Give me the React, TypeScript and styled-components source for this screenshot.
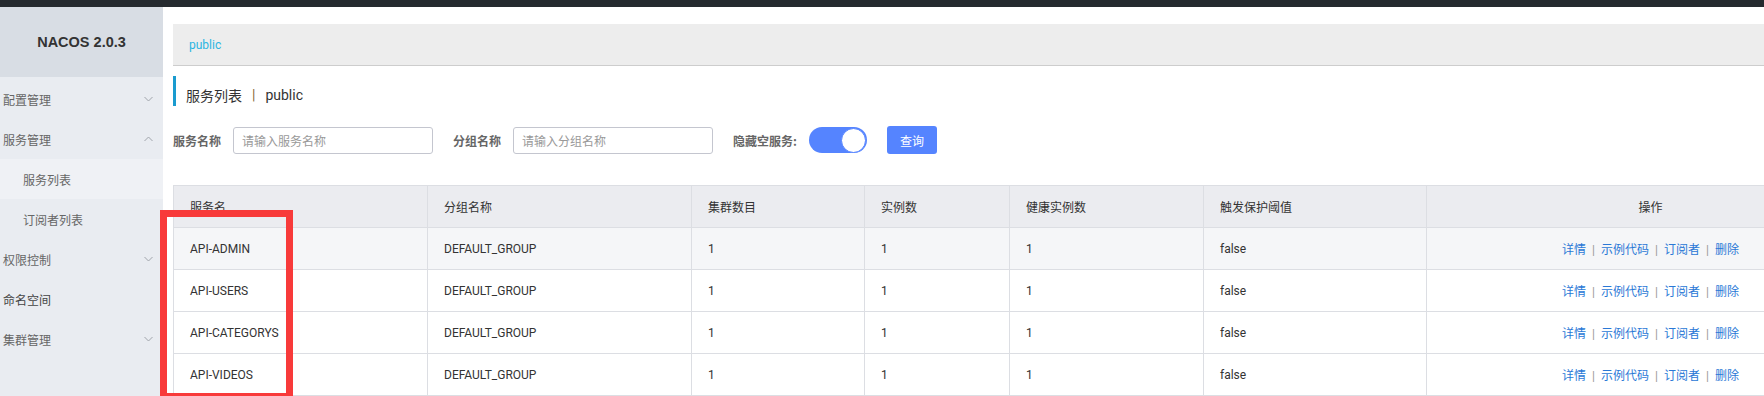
import React from "react";
import styled, { createGlobalStyle } from "styled-components";

const GlobalStyle = createGlobalStyle`
  html, body { margin: 0; padding: 0; background: #fff; overflow: hidden; }
  body { font-family: Roboto, "Noto Sans CJK SC", "Liberation Sans", sans-serif; font-size: 12px; color: #333; }
  * { box-sizing: border-box; }
`;

const Page = styled.div`
  width: 1764px;
  height: 396px;
  overflow: hidden;
  position: relative;
  display: flex;
  flex-direction: column;
`;

const TopBar = styled.div`
  height: 7px;
  background: #252a2f;
  flex: none;
`;

const Body = styled.div`
  flex: 1;
  display: flex;
  min-height: 0;
`;

const Sidebar = styled.div`
  width: 163px;
  flex: none;
  background: #e9ecf1;
  display: flex;
  flex-direction: column;
`;

const Logo = styled.div`
  height: 70px;
  background: #d8dde4;
  display: flex;
  align-items: center;
  justify-content: center;
  font-family: "Liberation Sans", Arial, sans-serif;
  font-weight: bold;
  font-size: 14.5px;
  color: #333;
  margin-bottom: 2px;
`;

const MenuItem = styled.div<{ $sub?: boolean; $active?: boolean; $dark?: boolean }>`
  height: 40px;
  display: flex;
  align-items: center;
  justify-content: space-between;
  padding: 0 10px 0 ${(p) => (p.$sub ? "23px" : "3px")};
  background: ${(p) => (p.$active ? "#eff1f5" : "transparent")};
  color: ${(p) => (p.$dark ? "#444" : "#666")};
  font-family: "Noto Sans CJK SC", sans-serif;
  font-size: 12px;
`;

const Main = styled.div`
  flex: 1;
  min-width: 0;
  padding: 17px 0 0 10px;
  display: flex;
  flex-direction: column;
`;

const Breadcrumb = styled.div`
  height: 42px;
  background: #ededed;
  border-bottom: 1px solid #cdcdcd;
  display: flex;
  align-items: center;
  padding-left: 16px;
  color: #2bb5e2;
  font-size: 12px;
  flex: none;
`;

const Title = styled.div`
  margin-top: 10px;
  height: 30px;
  border-left: 3px solid #1a9bcf;
  padding: 8px 0 0 10px;
  display: flex;
  align-items: center;
  font-size: 14px;
  color: #333;
  flex: none;
`;

const TitleSep = styled.span`
  margin: 0 10px;
  color: #8a6a3a;
`;

const SearchRow = styled.div`
  margin-top: 20px;
  height: 28px;
  display: flex;
  align-items: center;
  flex: none;
`;

const FormItem = styled.div`
  display: flex;
  align-items: center;
  gap: 12px;
  margin-right: 20px;
`;

const Label = styled.label`
  font-weight: bold;
  color: #666;
  font-size: 12px;
  font-family: "Noto Sans CJK SC", sans-serif;
`;

const Input = styled.input`
  width: 200px;
  height: 27px;
  border: 1px solid #c4c6cf;
  border-radius: 3px;
  padding: 0 8px;
  font-size: 12px;
  font-family: "Noto Sans CJK SC", sans-serif;
  outline: none;
  &::placeholder { color: #999; }
`;

const Switch = styled.div`
  width: 58px;
  height: 26px;
  border-radius: 13px;
  background: #5584ff;
  display: flex;
  justify-content: flex-end;
  align-items: center;
  padding-right: 1px;
`;

const Knob = styled.div`
  width: 25px;
  height: 25px;
  border-radius: 50%;
  background: #fff;
  border: 1px solid #5584ff;
`;

const Button = styled.button`
  width: 50px;
  height: 28px;
  border: none;
  border-radius: 3px;
  background: #5584ff;
  color: #fff;
  font-size: 12px;
  font-family: "Noto Sans CJK SC", sans-serif;
  padding: 0;
`;

const Table = styled.table`
  margin-top: 31px;
  width: 1701px;
  table-layout: fixed;
  border-collapse: collapse;
  flex: none;
`;

const Th = styled.th<{ $center?: boolean }>`
  height: 42px;
  background: #ebecf0;
  border: 1px solid #dcdee3;
  font-weight: normal;
  text-align: ${(p) => (p.$center ? "center" : "left")};
  padding: 0 16px;
  color: #333;
  font-family: "Noto Sans CJK SC", sans-serif;
  font-size: 12px;
`;

const Tr = styled.tr<{ $hover?: boolean }>`
  background: ${(p) => (p.$hover ? "#f5f6f8" : "#fff")};
`;

const Td = styled.td<{ $center?: boolean }>`
  height: 42px;
  border: 1px solid #dcdee3;
  padding: 0 16px;
  text-align: ${(p) => (p.$center ? "center" : "left")};
  color: #333;
  font-size: 12px;
`;

const ActionLink = styled.a`
  color: #2a78d6;
  text-decoration: none;
  font-family: "Noto Sans CJK SC", sans-serif;
`;

const ActionSep = styled.span`
  color: #999;
  margin: 0 6px;
`;

const Annotation = styled.div`
  position: absolute;
  left: 160px;
  top: 210px;
  width: 133px;
  height: 190px;
  border: 7px solid #f83a3a;
  pointer-events: none;
`;

const Chevron = ({ up }: { up?: boolean }) => (
  <svg width="9" height="6" viewBox="0 0 9 6" style={{ display: "block" }}>
    <polyline
      points={up ? "0.5,5 4.5,1 8.5,5" : "0.5,1 4.5,5 8.5,1"}
      fill="none"
      stroke="#a0a4ab"
      strokeWidth="1"
    />
  </svg>
);

const rows = ["API-ADMIN", "API-USERS", "API-CATEGORYS", "API-VIDEOS"];
const cols = [254, 264, 173, 145, 194, 223, 448];

export default function App() {
  return (
    <>
      <GlobalStyle />
      <Page>
        <TopBar />
        <Body>
          <Sidebar>
            <Logo>NACOS 2.0.3</Logo>
            <MenuItem>
              配置管理 <Chevron />
            </MenuItem>
            <MenuItem>
              服务管理 <Chevron up />
            </MenuItem>
            <MenuItem $sub $active>服务列表</MenuItem>
            <MenuItem $sub>订阅者列表</MenuItem>
            <MenuItem>
              权限控制 <Chevron />
            </MenuItem>
            <MenuItem $dark>命名空间</MenuItem>
            <MenuItem>
              集群管理 <Chevron />
            </MenuItem>
          </Sidebar>
          <Main>
            <Breadcrumb>public</Breadcrumb>
            <Title>
              服务列表<TitleSep>|</TitleSep>public
            </Title>
            <SearchRow>
              <FormItem>
                <Label>服务名称</Label>
                <Input placeholder="请输入服务名称" />
              </FormItem>
              <FormItem>
                <Label>分组名称</Label>
                <Input placeholder="请输入分组名称" />
              </FormItem>
              <FormItem>
                <Label>隐藏空服务:</Label>
                <Switch>
                  <Knob />
                </Switch>
              </FormItem>
              <FormItem>
                <Button>查询</Button>
              </FormItem>
            </SearchRow>
            <Table>
              <colgroup>
                {cols.map((w, i) => (
                  <col key={i} style={{ width: w }} />
                ))}
              </colgroup>
              <thead>
                <tr>
                  <Th>服务名</Th>
                  <Th>分组名称</Th>
                  <Th>集群数目</Th>
                  <Th>实例数</Th>
                  <Th>健康实例数</Th>
                  <Th>触发保护阈值</Th>
                  <Th $center>操作</Th>
                </tr>
              </thead>
              <tbody>
                {rows.map((name, i) => (
                  <Tr key={name} $hover={i === 0}>
                    <Td>{name}</Td>
                    <Td>DEFAULT_GROUP</Td>
                    <Td>1</Td>
                    <Td>1</Td>
                    <Td>1</Td>
                    <Td>false</Td>
                    <Td $center>
                      <ActionLink>详情</ActionLink>
                      <ActionSep>|</ActionSep>
                      <ActionLink>示例代码</ActionLink>
                      <ActionSep>|</ActionSep>
                      <ActionLink>订阅者</ActionLink>
                      <ActionSep>|</ActionSep>
                      <ActionLink>删除</ActionLink>
                    </Td>
                  </Tr>
                ))}
              </tbody>
            </Table>
          </Main>
        </Body>
        <Annotation />
      </Page>
    </>
  );
}
